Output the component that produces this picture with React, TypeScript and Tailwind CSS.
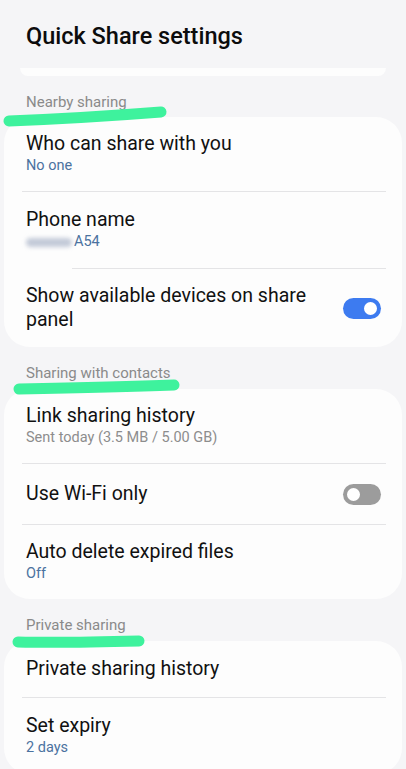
import React from "react";

type Row = {
  title: string;
  sub?: string;
  subTone?: "blue" | "grey";
  toggle?: "on" | "off";
  blurred?: boolean;
  pad?: string;
};

type Section = {
  header: string;
  stroke: string;
  rows: Row[];
};

const sections: Section[] = [
  {
    header: "Nearby sharing",
    stroke: "M9 21 C 60 19, 110 16, 161 12",
    rows: [
      { title: "Who can share with you", sub: "No one", subTone: "blue", pad: "py-[15px]" },
      { title: "Phone name", sub: "A54", subTone: "blue", blurred: true },
      { title: "Show available devices on share panel", toggle: "on", pad: "py-[15px]" },
    ],
  },
  {
    header: "Sharing with contacts",
    stroke: "M19 18 C 70 17, 120 16, 174 14",
    rows: [
      {
        title: "Link sharing history",
        sub: "Sent today (3.5 MB / 5.00 GB)",
        subTone: "grey",
        pad: "py-[15px]",
      },
      { title: "Use Wi-Fi only", toggle: "off", pad: "py-[18px]" },
      { title: "Auto delete expired files", sub: "Off", subTone: "blue", pad: "py-[15px]" },
    ],
  },
  {
    header: "Private sharing",
    stroke: "M18 19 C 60 20, 100 19, 139 18",
    rows: [
      { title: "Private sharing history" },
      { title: "Set expiry", sub: "2 days", subTone: "blue" },
    ],
  },
];

const Toggle = ({ on }: { on: boolean }) => (
  <div
    className={
      on
        ? "flex h-[21px] w-[38px] shrink-0 items-center justify-end rounded-full bg-[#3d7bf0] px-[2px]"
        : "flex h-[21px] w-[38px] shrink-0 items-center justify-start rounded-full bg-[#9c9c9c] px-[2px]"
    }
  >
    <div
      className={
        on
          ? "h-[17px] w-[17px] rounded-full border-[2px] border-[#3d7bf0] bg-white"
          : "h-[17px] w-[17px] rounded-full border-[2px] border-[#9c9c9c] bg-white"
      }
    />
  </div>
);

const SettingRow = ({ row, last }: { row: Row; last: boolean }) => (
  <div>
    <div className={`flex items-center gap-4 pl-[22px] pr-[21px] ${row.pad ?? "py-[16px]"}`}>
      <div className="flex-1">
        <div className="text-[19.5px] leading-[24px] text-[#111]">{row.title}</div>
        {row.sub && (
          <div
            className={
              row.subTone === "blue"
                ? "flex items-center text-[14.5px] leading-[20px] text-[#4b72a0]"
                : "flex items-center text-[14.5px] leading-[20px] text-[#8d8d8d]"
            }
          >
            {row.blurred && (
              <span className="mr-[2px] inline-block h-[9px] w-[46px] rounded-full bg-[#c3cad8] blur-[2px]" />
            )}
            {row.sub}
          </div>
        )}
      </div>
      {row.toggle && <Toggle on={row.toggle === "on"} />}
    </div>
    {!last && (
      <div
        className={
          row.blurred
            ? "ml-[68px] mr-[16px] h-px bg-[#e4e4e6]"
            : "ml-[18px] mr-[16px] h-px bg-[#e4e4e6]"
        }
      />
    )}
  </div>
);

export default function App() {
  return (
    <div
      className="h-[769px] w-[406px] overflow-hidden bg-[#f5f5f7]"
      style={{ fontFamily: "Roboto, 'Noto Sans', sans-serif" }}
    >
      <div className="px-[26px] pt-[20px] text-[23.5px] font-medium leading-[32px] text-[#0c0c0c]">
        Quick Share settings
      </div>
      <div className="mx-[20px] mt-[16px] h-[8px] rounded-b-[20px] bg-[#fdfdfd]" />

      {sections.map((s, i) => (
        <div key={s.header}>
          <div
            className={
              i === 0
                ? "relative z-10 px-[26px] pt-[16px] pb-[5px] text-[15px] leading-[20px] text-[#8a8a8a]"
                : "relative z-10 px-[26px] pt-[16px] pb-[6px] text-[15px] leading-[20px] text-[#8a8a8a]"
            }
          >
            {s.header}
            <svg
              className="pointer-events-none absolute left-0 top-[24px] h-[30px] w-[200px]"
              viewBox="0 0 200 30"
            >
              <path
                d={s.stroke}
                fill="none"
                stroke="#3ef29d"
                strokeWidth="11"
                strokeLinecap="round"
              />
            </svg>
          </div>
          <div className="mx-[4px] rounded-[26px] bg-[#fdfdfd]">
            {s.rows.map((r, j) => (
              <SettingRow key={r.title} row={r} last={j === s.rows.length - 1} />
            ))}
          </div>
        </div>
      ))}
    </div>
  );
}
